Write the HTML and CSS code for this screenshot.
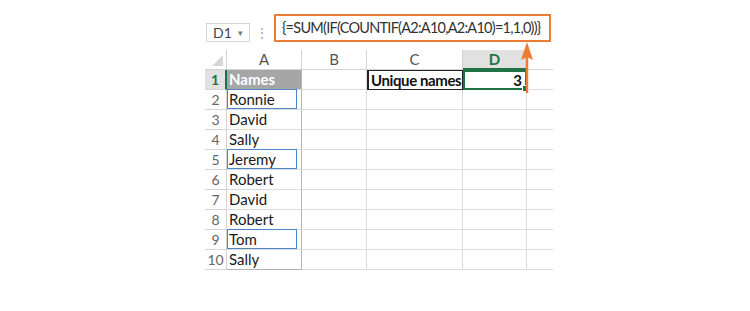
FILE: index.html
```html
<!DOCTYPE html>
<html lang="en">
<head>
  <meta charset="UTF-8" />
  <link rel="stylesheet" href="styles.css">
</head>
<body>

<div class="sheet">

  <!-- Formula bar -->
  <div class="formula-bar">
    <div class="name-box">D1 <span class="caret">&#9662;</span></div>
    <div class="dots">&#8942;</div>
    <div class="formula">{=SUM(IF(COUNTIF(A2:A10,A2:A10)=1,1,0))}</div>
  </div>

  <!-- Grid -->
  <div class="grid">
    <div class="corner"><span class="tri"></span></div>
    <div class="col-head">A</div>
    <div class="col-head">B</div>
    <div class="col-head">C</div>
    <div class="col-head active">D</div>
    <div class="col-head last"></div>

    <div class="row-head active">1</div>
    <div class="cell names head">Names</div>
    <div class="cell"></div>
    <div class="cell label">Unique names</div>
    <div class="cell result">3</div>
    <div class="cell last"></div>

    <div class="row-head">2</div>
    <div class="cell names"><span class="dup">Ronnie</span></div>
    <div class="cell"></div><div class="cell"></div><div class="cell"></div><div class="cell last"></div>

    <div class="row-head">3</div>
    <div class="cell names">David</div>
    <div class="cell"></div><div class="cell"></div><div class="cell"></div><div class="cell last"></div>

    <div class="row-head">4</div>
    <div class="cell names">Sally</div>
    <div class="cell"></div><div class="cell"></div><div class="cell"></div><div class="cell last"></div>

    <div class="row-head">5</div>
    <div class="cell names"><span class="dup">Jeremy</span></div>
    <div class="cell"></div><div class="cell"></div><div class="cell"></div><div class="cell last"></div>

    <div class="row-head">6</div>
    <div class="cell names">Robert</div>
    <div class="cell"></div><div class="cell"></div><div class="cell"></div><div class="cell last"></div>

    <div class="row-head">7</div>
    <div class="cell names">David</div>
    <div class="cell"></div><div class="cell"></div><div class="cell"></div><div class="cell last"></div>

    <div class="row-head">8</div>
    <div class="cell names">Robert</div>
    <div class="cell"></div><div class="cell"></div><div class="cell"></div><div class="cell last"></div>

    <div class="row-head">9</div>
    <div class="cell names"><span class="dup">Tom</span></div>
    <div class="cell"></div><div class="cell"></div><div class="cell"></div><div class="cell last"></div>

    <div class="row-head">10</div>
    <div class="cell names end">Sally</div>
    <div class="cell"></div><div class="cell"></div><div class="cell"></div><div class="cell last"></div>
  </div>

  <!-- Arrow from D1 up to the formula -->
  <svg class="arrow" width="16" height="54" viewBox="0 0 16 54">
    <path d="M8 14 L8 52" stroke="#ed7d31" stroke-width="2.5" fill="none" />
    <path d="M8 1 L14 19 L8 16 L2 19 Z" fill="#ed7d31" />
  </svg>

</div>

</body>
</html>
```

FILE: styles.css
```css
/* Page setup */
html, body {
  margin: 0;
  padding: 0;
  background: #fff;
  font-family: Lato, "Open Sans", sans-serif;
}

.sheet {
  position: relative;
  padding: 14px 0 0 205px;
}

/* Formula bar */
.formula-bar {
  display: flex;
  align-items: flex-end;
  height: 28px;
}

.name-box {
  box-sizing: border-box;
  width: 44px;
  height: 19px;
  margin-left: 1px;
  border: 1px solid #d4d4d4;
  font-size: 14px;
  line-height: 17px;
  color: #444;
  padding-left: 6px;
}

.caret {
  font-size: 9px;
  color: #777;
  margin-left: 3px;
  vertical-align: 2px;
}

.dots {
  width: 24px;
  text-align: center;
  color: #aaa;
  font-size: 14px;
  line-height: 19px;
}

.formula {
  box-sizing: border-box;
  flex: 0 0 277px;
  min-width: 0;
  height: 28px;
  border: 2px solid #ed7d31;
  padding-left: 6px;
  font-size: 14.5px;
  letter-spacing: -0.75px;
  line-height: 24px;
  color: #333;
  white-space: nowrap;
  overflow: hidden;
}

/* Spreadsheet grid */
.grid {
  display: grid;
  grid-template-columns: 22px 75px 65px 96px 64px 26px;
  grid-auto-rows: 20px;
  margin-top: 8px;
  font-size: 15px;
}

.grid > div {
  box-sizing: border-box;
  line-height: 19px;
}

.corner {
  position: relative;
  border-right: 1px solid #d4d4d4;
  border-bottom: 1px solid #d4d4d4;
}

.tri {
  position: absolute;
  right: 3px;
  bottom: 3px;
  width: 0;
  height: 0;
  border-left: 11px solid transparent;
  border-bottom: 11px solid #d6d6d6;
}

.col-head {
  text-align: center;
  color: #555;
  border-right: 1px solid #d4d4d4;
  border-bottom: 1px solid #d4d4d4;
}

.col-head.active {
  background: #e1e1e1;
  color: #217346;
  font-weight: bold;
  border-bottom: 2px solid #217346;
}

.col-head.last { border-right: 0; }

.row-head {
  text-align: center;
  color: #666;
  border-right: 1px solid #d4d4d4;
  border-bottom: 1px solid #d4d4d4;
  font-size: 14px;
}

.row-head.active {
  background: #e1e1e1;
  color: #217346;
  font-weight: bold;
  border-right: 2px solid #217346;
}

.cell {
  border-right: 1px solid #dcdcdc;
  border-bottom: 1px solid #dcdcdc;
  color: #1a1a1a;
  padding-left: 2px;
  white-space: nowrap;
}

.cell.last { border-right: 0; }

.cell.names {
  border-right: 1px solid #b4b4b4;
}

.cell.names.end { border-bottom: 1px solid #b4b4b4; }

.cell.head {
  background: #a6a6a6;
  color: #fff;
  font-weight: bold;
}

.cell.names:has(.dup) { padding-left: 0; }

.dup {
  display: block;
  box-sizing: border-box;
  width: 70px;
  height: 20px;
  margin-top: -1px;
  padding-left: 1px;
  border: 1px solid #4a86c8;
}

.cell.label {
  font-weight: bold;
  color: #111;
  letter-spacing: -0.4px;
  border: 1px solid #222;
  border-left-width: 2px;
}

.cell.result {
  position: relative;
  font-weight: bold;
  color: #111;
  text-align: right;
  padding-right: 3px;
  border: 2px solid #217346;
  line-height: 16px;
}

.cell.result::after {
  content: "";
  position: absolute;
  right: -4px;
  bottom: -4px;
  width: 5px;
  height: 5px;
  background: #217346;
  border: 1px solid #fff;
}

/* Arrow overlay */
.arrow {
  position: absolute;
  left: 519px;
  top: 41px;
}
```
